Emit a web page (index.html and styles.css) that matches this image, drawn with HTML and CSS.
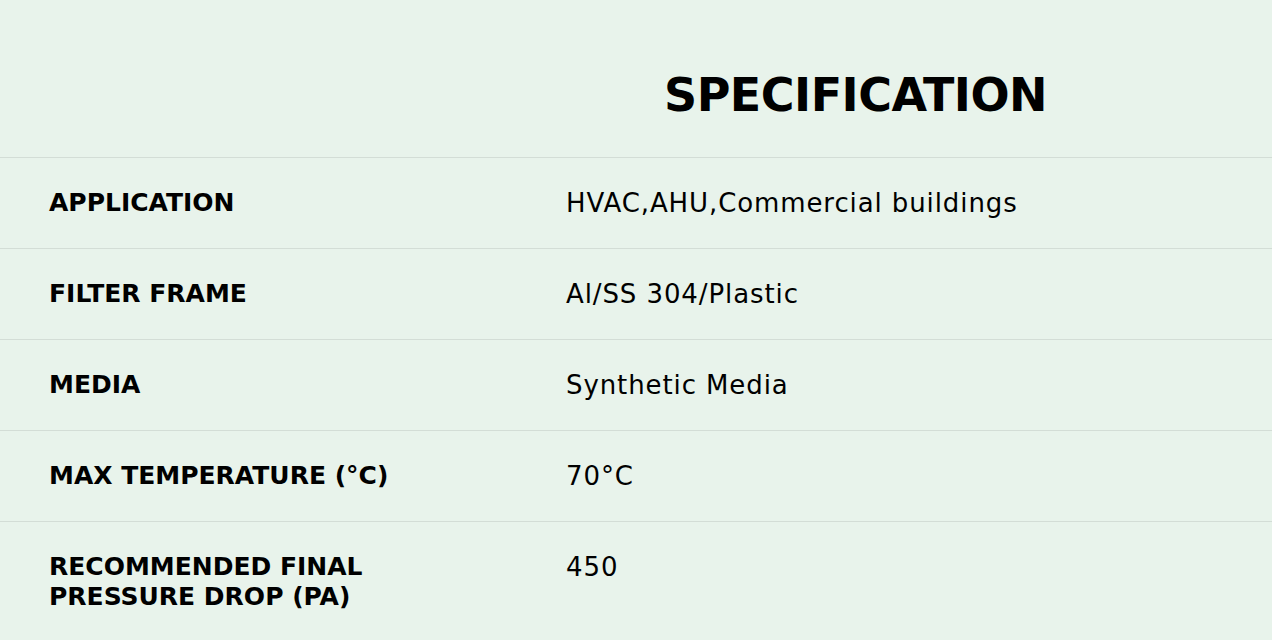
FILE: index.html
```html
<!DOCTYPE html>
<html lang="en">
<head>
<meta charset="utf-8">
<title>Specification</title>
<link rel="stylesheet" href="styles.css">
</head>
<body>
<section class="spec">
  <header class="spec-head">
    <h2 class="spec-title">SPECIFICATION</h2>
  </header>
  <div class="spec-table">
    <div class="spec-row">
      <div class="spec-label">APPLICATION</div>
      <div class="spec-value">HVAC,AHU,Commercial buildings</div>
    </div>
    <div class="spec-row">
      <div class="spec-label">FILTER FRAME</div>
      <div class="spec-value">Al/SS 304/Plastic</div>
    </div>
    <div class="spec-row">
      <div class="spec-label">MEDIA</div>
      <div class="spec-value">Synthetic Media</div>
    </div>
    <div class="spec-row">
      <div class="spec-label">MAX TEMPERATURE (°C)</div>
      <div class="spec-value">70°C</div>
    </div>
    <div class="spec-row">
      <div class="spec-label">RECOMMENDED FINAL PRESSURE DROP (PA)</div>
      <div class="spec-value">450</div>
    </div>
  </div>
</section>
</body>
</html>
```
FILE: styles.css
```css
html, body {
  margin: 0;
  padding: 0;
  background: #e8f3eb;
}
body {
  font-family: "DejaVu Sans", "Liberation Sans", sans-serif;
  color: #000;
  overflow: hidden;
}
.spec {
  width: 1272px;
}
.spec-head {
  height: 157px;
  display: flex;
  align-items: flex-start;
  padding-left: 664px;
  padding-top: 72px;
  box-sizing: border-box;
}
.spec-title {
  margin: 0;
  font-size: 46px;
  font-weight: 800;
  line-height: 46px;
  letter-spacing: -0.5px;
}
.spec-row {
  display: grid;
  grid-template-columns: 517px 1fr;
  border-top: 1px solid #d3ddd6;
  padding: 30px 0 30px 49px;
  height: 30px;
  box-sizing: content-box;
}
.spec-label {
  font-weight: 700;
  font-size: 25px;
  line-height: 30px;
  width: 360px;
}
.spec-value {
  font-size: 26px;
  line-height: 30px;
  letter-spacing: 0.9px;
}
```
